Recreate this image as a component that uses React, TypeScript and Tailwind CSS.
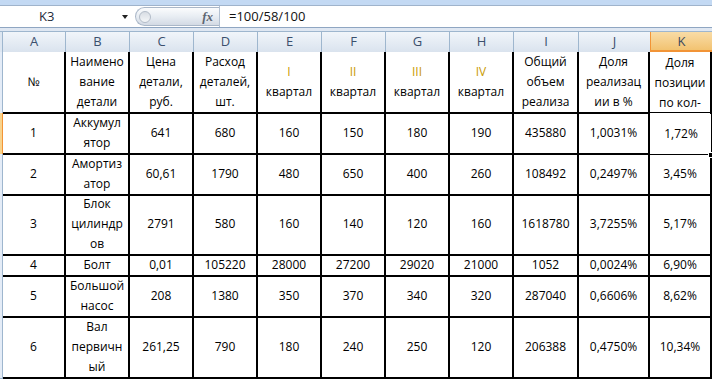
import React from "react";

const GRID =
  "grid grid-cols-[3px_63px_64px_64px_64px_64px_64px_64px_64px_65px_71px_62px]";

const letters = ["A", "B", "C", "D", "E", "F", "G", "H", "I", "J", "K"];

type HeaderCell = { lines: string[]; roman?: string };

const headerCells: HeaderCell[] = [
  { lines: ["№"] },
  { lines: ["Наимено", "вание", "детали"] },
  { lines: ["Цена", "детали,", "руб."] },
  { lines: ["Расход", "деталей,", "шт."] },
  { lines: ["квартал"], roman: "I" },
  { lines: ["квартал"], roman: "II" },
  { lines: ["квартал"], roman: "III" },
  { lines: ["квартал"], roman: "IV" },
  { lines: ["Общий", "объем", "реализа"] },
  { lines: ["Доля", "реализац", "ии в %"] },
  { lines: ["Доля", "позиции", "по кол-"] },
];

const rows: { h: string; cells: string[] }[] = [
  {
    h: "h-[41px]",
    cells: ["1", "Аккумул\nятор", "641", "680", "160", "150", "180", "190", "435880", "1,0031%", "1,72%"],
  },
  {
    h: "h-[40px]",
    cells: ["2", "Амортиз\nатор", "60,61", "1790", "480", "650", "400", "260", "108492", "0,2497%", "3,45%"],
  },
  {
    h: "h-[61px]",
    cells: ["3", "Блок\nцилиндр\nов", "2791", "580", "160", "140", "120", "160", "1618780", "3,7255%", "5,17%"],
  },
  {
    h: "h-[21px]",
    cells: ["4", "Болт", "0,01", "105220", "28000", "27200", "29020", "21000", "1052", "0,0024%", "6,90%"],
  },
  {
    h: "h-[41px]",
    cells: ["5", "Большой\nнасос", "208", "1380", "350", "370", "340", "320", "287040", "0,6606%", "8,62%"],
  },
  {
    h: "h-[61px]",
    cells: ["6", "Вал\nпервичн\nый", "261,25", "790", "180", "240", "250", "120", "206388", "0,4750%", "10,34%"],
  },
];

function Lines({ text }: { text: string }) {
  return (
    <div className="flex flex-col items-center text-center leading-[20px]">
      {text.split("\n").map((l, i) => (
        <span key={i} className="whitespace-nowrap">
          {l}
        </span>
      ))}
    </div>
  );
}

export default function App() {
  return (
    <div className="w-[712px] h-[379px] overflow-hidden bg-white font-['Open_Sans',sans-serif] text-black">
      {/* title strip */}
      <div className="h-[6px] bg-[#c3d9f3] border-b border-[#9fb3cb]" />
      {/* formula bar */}
      <div className="h-[22px] flex items-stretch bg-white border-b border-[#8fa6c2]">
        <div className="w-[133px] flex items-center bg-white">
          <span className="ml-[39px] text-[13px] leading-none text-[#1e2a3a]">K3</span>
          <svg className="ml-auto mr-[5px]" width="6" height="4" viewBox="0 0 6 4">
            <path d="M0 0 H6 L3 4 Z" fill="#222" />
          </svg>
        </div>
        <div className="ml-[2px] my-[1px] w-[84px] relative rounded-l-full border border-r-0 border-[#aab7c8] bg-linear-to-b from-[#fbfcfd] via-[#e8edf3] to-[#d3dae4] flex items-center">
          <div className="ml-[3px] w-[12px] h-[12px] rounded-full border border-[#b3bcc8] bg-linear-to-b from-[#d8dde4] to-[#f4f6f8]" />
          <span className="ml-auto mr-[6px] font-['Liberation_Serif',serif] italic font-bold text-[13px] leading-none text-[#5d6672]">
            fx
          </span>
        </div>
        <div className="w-px bg-[#b2c0d1]" />
        <div className="flex items-center pl-[9px] text-[13px] leading-none text-[#111]">=100/58/100</div>
      </div>
      {/* gap */}
      <div className="h-[3px] bg-[#dfe7f2]" />
      {/* column headers */}
      <div className={`${GRID} h-[21px] border-y border-[#9eb6ce]`}>
        <div className="bg-[#dde6f1] border-r border-[#9eb6ce]" />
        {letters.map((l, i) =>
          l === "K" ? (
            <div
              key={l}
              className="flex items-center justify-center text-[13px] text-[#3b4a5e] bg-linear-to-b from-[#f9dca6] to-[#f1c06a] border-l border-[#f29436] shadow-[inset_0_-2px_0_#f29436]"
            >
              {l}
            </div>
          ) : (
            <div
              key={l}
              className={`flex items-center justify-center text-[13px] text-[#3b4f6d] bg-linear-to-b from-[#f1f5fa] to-[#dae3ee] ${
                i < 9 ? "border-r border-[#9eb6ce]" : ""
              }`}
            >
              {l}
            </div>
          )
        )}
      </div>
      {/* header row */}
      <div className={`${GRID} h-[61px] text-[12px]`}>
        <div className="bg-[#e4ecf7] border-r border-b border-[#9eb6ce]" />
        {headerCells.map((c, i) => (
          <div
            key={i}
            className={`flex items-center justify-center border-r-2 border-black ${
              i === 10 ? "" : "border-b-2"
            }`}
          >
            <div className="flex flex-col items-center text-center leading-[20px]">
              {c.roman && <span className="text-[#c99a00]">{c.roman}</span>}
              {c.lines.map((l, j) => (
                <span key={j} className="whitespace-nowrap">
                  {l}
                </span>
              ))}
            </div>
          </div>
        ))}
      </div>
      {/* data rows */}
      {rows.map((r, ri) => (
        <div key={ri} className={`${GRID} ${r.h} text-[12px]`}>
          <div
            className={
              ri === 0
                ? "bg-[#f8d38c] border-r border-b border-[#f29436]"
                : "bg-[#e4ecf7] border-r border-b border-[#9eb6ce]"
            }
          />
          {r.cells.map((c, ci) =>
            ri === 0 && ci === 10 ? (
              <div key={ci} className="relative flex items-center justify-center">
                <Lines text={c} />
                <div className="absolute left-[-1px] top-[-1px] right-0 bottom-0 border border-black pointer-events-none" />
                <div className="absolute right-[-2px] bottom-[-3px] w-[6px] h-[6px] bg-black border border-white" />
              </div>
            ) : (
              <div
                key={ci}
                className="flex items-center justify-center border-r-2 border-b-2 border-black overflow-visible"
              >
                <Lines text={c} />
              </div>
            )
          )}
        </div>
      ))}
    </div>
  );
}
